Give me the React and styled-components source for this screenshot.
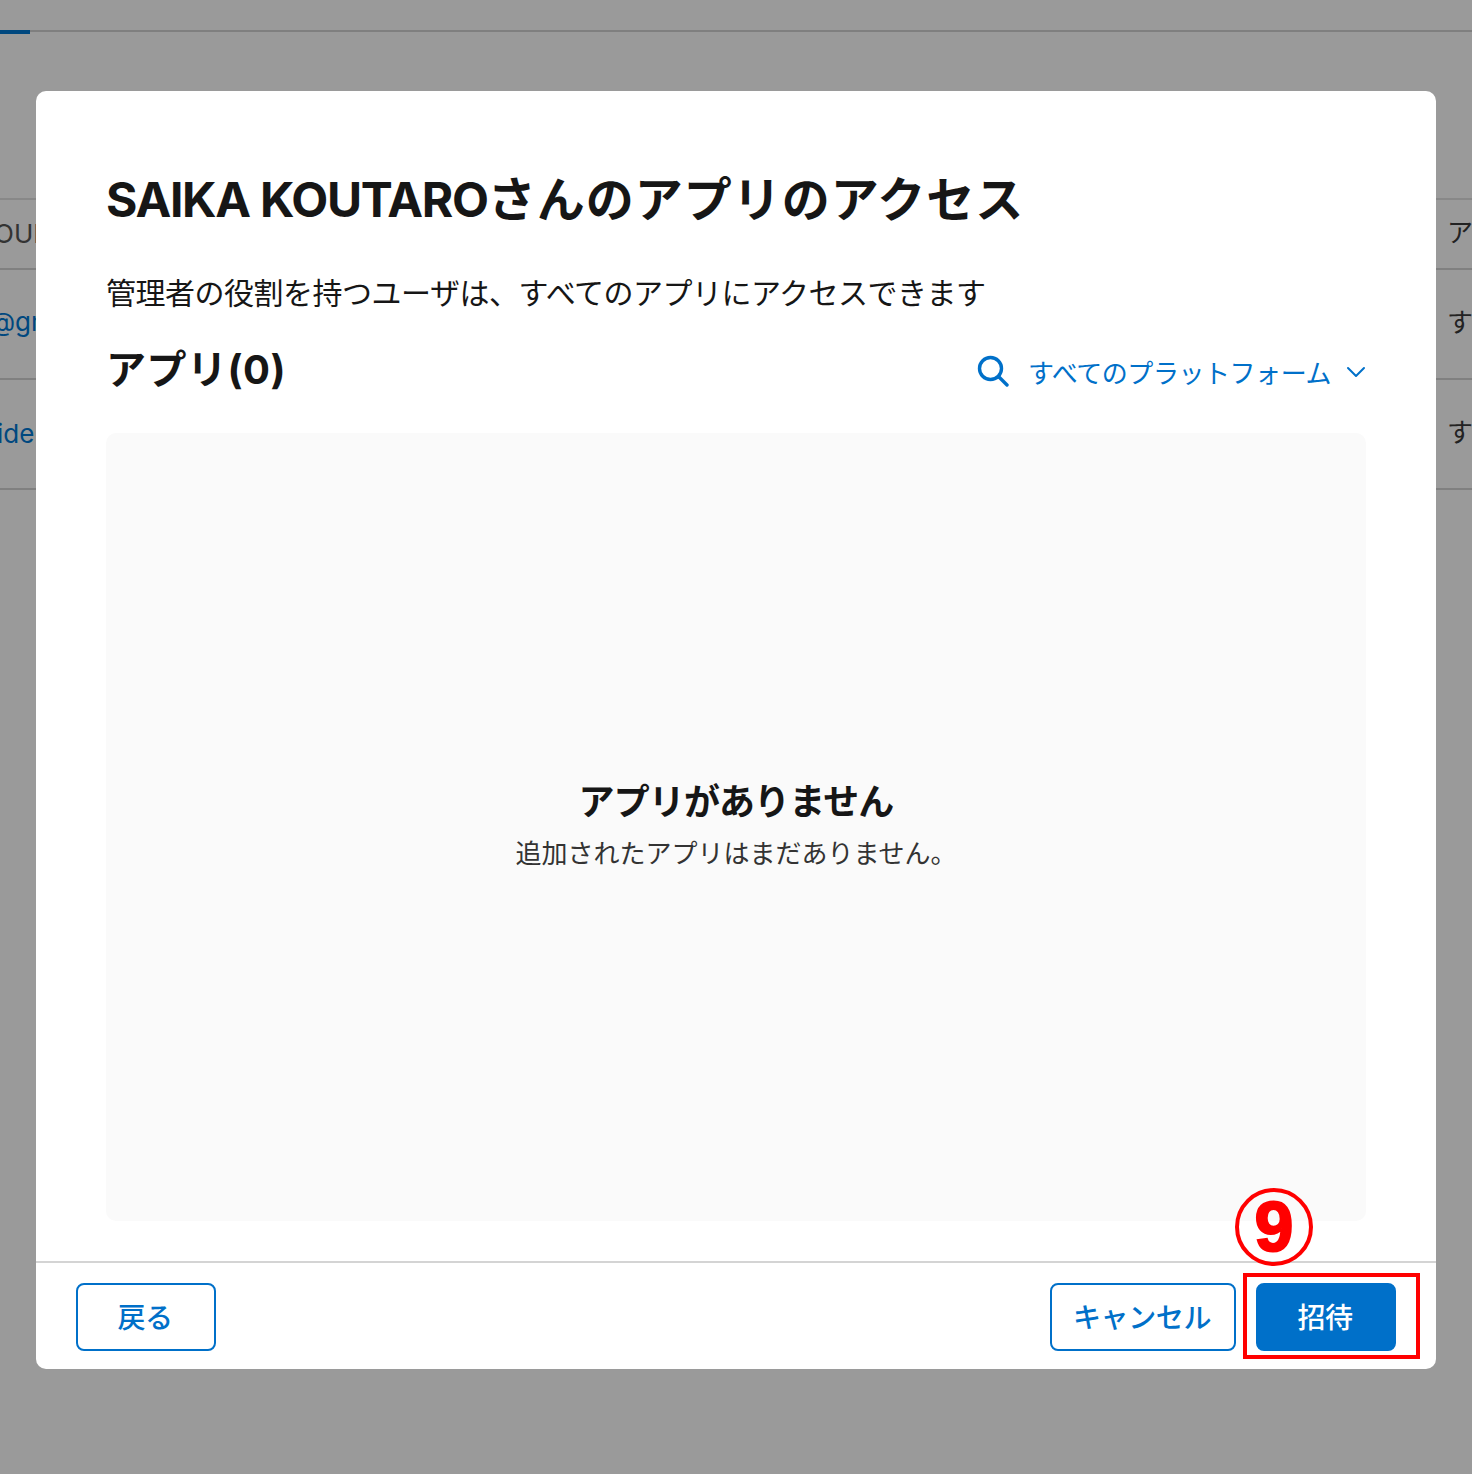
import React from "react";
import styled, { createGlobalStyle } from "styled-components";

const FONT = `Inter, "Noto Sans CJK JP", "Noto Sans", sans-serif`;
const BLUE = "#0070c9";

const Global = createGlobalStyle`
  html, body { margin: 0; padding: 0; }
  body { font-family: ${FONT}; background: #999; }
`;

const Page = styled.div`
  position: relative;
  width: 1472px;
  height: 1474px;
  overflow: hidden;
  background: #9a9a9a;
`;

const Tabs = styled.div`
  height: 30px;
  border-bottom: 2px solid #7f7f7f;
  position: relative;
  margin-bottom: 166px;
`;

const TabMark = styled.div`
  position: absolute;
  left: 0;
  bottom: -4px;
  width: 30px;
  height: 4px;
  background: #00487f;
`;

const Row = styled.div`
  display: flex;
  justify-content: space-between;
  align-items: center;
  height: ${(p) => p.$h}px;
  padding-bottom: 5px;
  border-top: ${(p) => (p.$first ? "2px solid #888" : "none")};
  border-bottom: 2px solid #808080;
  box-sizing: border-box;
  font-size: 26px;
  white-space: nowrap;
`;

const LeftCell = styled.span`
  margin-left: ${(p) => p.$x}px;
  margin-top: ${(p) => p.$down || 0}px;
  color: ${(p) => (p.$link ? "#00487f" : "#333")};
`;

const RightCell = styled.span`
  margin-left: auto;
  margin-bottom: 2px;
  width: 25px;
  color: #222;
`;

const Modal = styled.div`
  position: absolute;
  left: 36px;
  top: 91px;
  width: 1400px;
  height: 1278px;
  background: #fff;
  border-radius: 10px;
  display: flex;
  flex-direction: column;
`;

const Body = styled.div`
  flex: 1;
  display: flex;
  flex-direction: column;
  padding: 0 70px 40px;
  min-height: 0;
`;

const Title = styled.h1`
  margin: 77px 0 0;
  height: 64px;
  line-height: 64px;
  font-size: 48px;
  font-weight: 700;
  color: #161616;
  white-space: nowrap;
`;

const TitleName = styled.span`
  letter-spacing: -1.3px;
`;

const TitleRest = styled.span`
  letter-spacing: 1px;
`;

const Description = styled.p`
  margin: 39px 0 0;
  height: 44px;
  line-height: 44px;
  font-size: 30px;
  letter-spacing: -0.5px;
  color: #161616;
  white-space: nowrap;
`;

const AppsHeader = styled.div`
  display: flex;
  justify-content: space-between;
  align-items: center;
  height: 56px;
  margin-top: 26px;
`;

const AppsTitle = styled.h2`
  margin: 2px 0 0;
  font-size: 40px;
  line-height: 56px;
  font-weight: 700;
  color: #161616;
  letter-spacing: 0.5px;
`;

const Filter = styled.div`
  display: flex;
  align-items: center;
  color: ${BLUE};
  font-size: 26px;
  margin-top: 4px;
`;

const FilterLabel = styled.span`
  margin: 0 15px 0 19px;
  letter-spacing: -0.45px;
`;

const ChevronWrap = styled.span`
  display: flex;
  margin-top: 2px;
`;

const EmptyPanel = styled.div`
  flex: 1;
  margin-top: 36px;
  padding-bottom: 2px;
  background: #fafafa;
  border-radius: 10px;
  display: flex;
  flex-direction: column;
  align-items: center;
  justify-content: center;
`;

const EmptyTitle = styled.div`
  font-size: 36px;
  line-height: 48px;
  font-weight: 700;
  color: #161616;
  letter-spacing: -0.9px;
`;

const EmptyText = styled.div`
  margin-top: 8px;
  font-size: 26px;
  line-height: 40px;
  color: #333;
`;

const Footer = styled.div`
  height: 108px;
  border-top: 2px solid #d4d4d4;
  box-sizing: border-box;
  display: flex;
  justify-content: space-between;
  padding: 20px 40px 0;
`;

const Actions = styled.div`
  display: flex;
  gap: 20px;
`;

const Button = styled.button`
  box-sizing: border-box;
  height: 68px;
  min-width: 140px;
  padding: 0 23px 3px 21px;
  border-radius: 8px;
  border: 2px solid ${BLUE};
  background: ${(p) => (p.$primary ? BLUE : "#fff")};
  color: ${(p) => (p.$primary ? "#fff" : BLUE)};
  font-family: ${FONT};
  font-size: 28px;
  font-weight: 500;
  letter-spacing: -0.4px;
  white-space: nowrap;
`;

const Highlight = styled.div`
  position: absolute;
  left: 1243px;
  top: 1273px;
  width: 177px;
  height: 86px;
  box-sizing: border-box;
  border: 4px solid #f00;
`;

const Step = styled.div`
  position: absolute;
  left: 1235px;
  top: 1188px;
  width: 78px;
  height: 78px;
  box-sizing: border-box;
  border: 4px solid #f00;
  border-radius: 50%;
  display: flex;
  align-items: center;
  justify-content: center;
  color: #f00;
  font-family: "Liberation Sans", sans-serif;
  font-size: 70px;
  font-weight: 700;
  line-height: 1;
  -webkit-text-stroke: 2px #f00;
`;

const Icon = () => (
  <svg width="32" height="32" viewBox="0 0 32 32" fill="none" stroke={BLUE} strokeWidth="3.4" strokeLinecap="round">
    <circle cx="13.5" cy="13.5" r="11" />
    <path d="M22 22 L30 30" />
  </svg>
);

const Chevron = () => (
  <svg width="20" height="12" viewBox="0 0 20 12" fill="none" stroke={BLUE} strokeWidth="2" strokeLinecap="round" strokeLinejoin="round">
    <path d="M2 2 L10 10 L18 2" />
  </svg>
);

export default function App() {
  return (
    <Page>
      <Global />
      <Tabs><TabMark /></Tabs>
      <Row $h={72} $first>
        <LeftCell $x={-6} $down={4}>OUNT</LeftCell>
        <RightCell>ア</RightCell>
      </Row>
      <Row $h={110}>
        <LeftCell $x={-10} $link>@gmail</LeftCell>
        <RightCell>す</RightCell>
      </Row>
      <Row $h={110}>
        <LeftCell $x={-3} $down={4} $link>ide</LeftCell>
        <RightCell>す</RightCell>
      </Row>
      <Modal>
        <Body>
          <Title><TitleName>SAIKA KOUTARO</TitleName><TitleRest>さんのアプリのアクセス</TitleRest></Title>
          <Description>管理者の役割を持つユーザは、すべてのアプリにアクセスできます</Description>
          <AppsHeader>
            <AppsTitle>アプリ(0)</AppsTitle>
            <Filter>
              <Icon />
              <FilterLabel>すべてのプラットフォーム</FilterLabel>
              <ChevronWrap><Chevron /></ChevronWrap>
            </Filter>
          </AppsHeader>
          <EmptyPanel>
            <EmptyTitle>アプリがありません</EmptyTitle>
            <EmptyText>追加されたアプリはまだありません。</EmptyText>
          </EmptyPanel>
        </Body>
        <Footer>
          <Button>戻る</Button>
          <Actions>
            <Button>キャンセル</Button>
            <Button $primary>招待</Button>
          </Actions>
        </Footer>
      </Modal>
      <Highlight />
      <Step>9</Step>
    </Page>
  );
}
